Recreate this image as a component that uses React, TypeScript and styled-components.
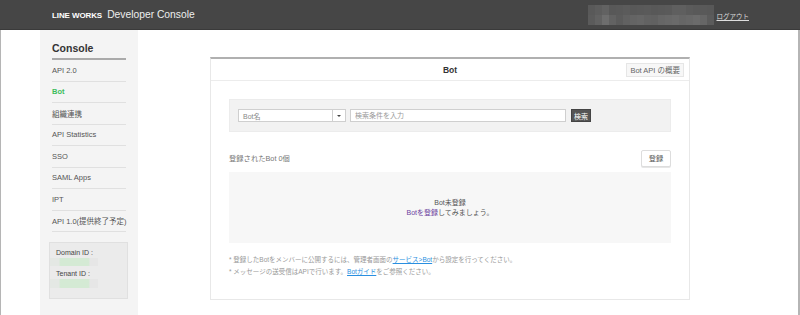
import React from 'react';
import styled, {createGlobalStyle} from 'styled-components'

const GlobalStyle = createGlobalStyle`
  html, body {
    margin: 0;
    padding: 0;
    background: #fff;
  }
  body {
    font-family: "Liberation Sans", "Noto Sans CJK JP", sans-serif;
    color: #555;
  }
`

const Page = styled.div`
  width: 800px;
  height: 315px;
  box-sizing: border-box;
  display: flex;
  flex-direction: column;
  overflow: hidden;
`

const Header = styled.header`
  height: 30px;
  flex-shrink: 0;
  box-sizing: border-box;
  background: #464646;
  border-bottom: 1px solid #3a3a3a;
  display: flex;
  align-items: center;
  justify-content: space-between;
  padding: 0 51px 0 52px;
`

const Logo = styled.div`
  display: flex;
  align-items: baseline;
  gap: 5px;
  color: #fff;
`

const LogoMark = styled.span`
  font-size: 8px;
  font-weight: bold;
  letter-spacing: -0.1px;
`

const LogoTitle = styled.span`
  font-size: 10.3px;
  color: #eee;
`

const UserArea = styled.div`
  display: flex;
  align-items: center;
  gap: 3px;
`

const Mosaic = styled.div`
  display: grid;
  grid-template-columns: repeat(18, 7px);
  grid-auto-rows: 10px;
  opacity: 0.9;
`

const Logout = styled.a`
  font-size: 6.5px;
  color: #ddd;
  text-decoration: underline;
  margin-top: 2px;
`

const Body = styled.div`
  flex: 1;
  display: flex;
  border-left: 1px solid #b5b5b5;
  border-right: 2px solid #b5b5b5;
  padding-left: 39px;
`

const Sidebar = styled.nav`
  width: 98px;
  box-sizing: border-box;
  background: #f4f4f4;
  padding: 0 12px;
`

const SideTitle = styled.div`
  font-size: 10.5px;
  font-weight: bold;
  color: #333;
  line-height: 14px;
  padding: 11px 0 3px;
  border-bottom: 2px solid #aaa;
`

const MenuItem = styled.div<{ active?: boolean }>`
  height: 20.5px;
  display: flex;
  align-items: center;
  font-size: 7.5px;
  white-space: nowrap;
  border-bottom: 1px solid #e0e0e0;
  color: ${({active}) => (active ? '#3dbd5d' : '#555')};
  font-weight: ${({active}) => (active ? 'bold' : 'normal')};
`

const IdBox = styled.div`
  margin: 10px -2px 0 -3px;
  background: #ebebeb;
  border: 1px solid #e0e0e0;
  padding: 5px 6px 7px;
  font-size: 7px;
  color: #444;
`

const IdLabel = styled.div`
  line-height: 10px;
  & + & {
    margin-top: 0;
  }
`

const IdValue = styled.div<{ tall?: boolean }>`
  width: 48px;
  height: ${({tall}) => (tall ? 9 : 8)}px;
  margin: 0 0 3px -6px;
  background: linear-gradient(to right, #e4e8e4 0, #e4e8e4 18%, #d4ead4 22%, #d4ead4 80%, #e6e6e6 84%);
`

const Main = styled.main`
  flex: 1;
  padding: 27px 0 0 72px;
`

const Panel = styled.section`
  width: 480px;
  box-sizing: border-box;
  border-top: 2px solid #b0b0b0;
  border-left: 1px solid #e8e8e8;
  border-right: 1px solid #e8e8e8;
  border-bottom: 1px solid #e8e8e8;
`

const PanelHead = styled.div`
  height: 21px;
  border-bottom: 1px solid #ececec;
  display: grid;
  grid-template-columns: 1fr auto 1fr;
  align-items: center;
`

const PanelTitle = styled.div`
  grid-column: 2;
  font-size: 8.5px;
  font-weight: bold;
  color: #333;
`

const GhostButton = styled.button`
  justify-self: end;
  margin-right: 5px;
  height: 14px;
  padding: 0 3px;
  font-family: inherit;
  font-size: 7.5px;
  color: #666;
  background: #f7f7f7;
  border: 1px solid #e6e6e6;
  cursor: pointer;
`

const PanelBody = styled.div`
  padding: 18px 18px 21px;
`

const SearchBox = styled.div`
  height: 33px;
  box-sizing: border-box;
  background: #f2f2f2;
  border: 1px solid #ececec;
  display: flex;
  align-items: center;
  padding-left: 8px;
`

const Select = styled.div`
  width: 108px;
  height: 13px;
  box-sizing: border-box;
  display: flex;
  background: #fff;
  border: 1px solid #cfcfcf;
  font-size: 7px;
  color: #888;
`

const SelectText = styled.span`
  flex: 1;
  display: flex;
  align-items: center;
  padding-left: 4px;
`

const SelectArrow = styled.span`
  width: 12px;
  border-left: 1px solid #cfcfcf;
  display: flex;
  align-items: center;
  justify-content: center;
  &::after {
    content: '';
    border-left: 2px solid transparent;
    border-right: 2px solid transparent;
    border-top: 2px solid #444;
  }
`

const Input = styled.input`
  width: 216px;
  height: 13px;
  box-sizing: border-box;
  margin-left: 4px;
  padding: 0 4px;
  border: 1px solid #cfcfcf;
  font-family: inherit;
  font-size: 7px;
  outline: none;
  &::placeholder {
    color: #999;
  }
`

const DarkButton = styled.button`
  margin-left: 5px;
  width: 20px;
  height: 13px;
  padding: 0;
  background: #555;
  border: 1px solid #444;
  color: #fff;
  font-family: inherit;
  font-size: 7px;
`

const ListHead = styled.div`
  margin-top: 18px;
  height: 16px;
  display: flex;
  align-items: center;
  justify-content: space-between;
  font-size: 7.3px;
  color: #777;
`

const LightButton = styled.button`
  width: 30px;
  height: 17px;
  padding: 0;
  background: #fff;
  border: 1px solid #ddd;
  border-radius: 2px;
  box-shadow: 0 1px 0 #e6e6e6;
  color: #555;
  font-family: inherit;
  font-size: 7.3px;
`

const Empty = styled.div`
  margin-top: 6px;
  height: 71px;
  background: #f7f7f7;
  display: flex;
  flex-direction: column;
  align-items: center;
  justify-content: center;
  font-size: 7px;
  line-height: 10px;
  color: #555;
`

const PurpleLink = styled.a`
  color: #6b3fa0;
`

const Notes = styled.ul`
  list-style: none;
  margin: 11px 0 0;
  padding: 0;
  font-size: 6.5px;
  line-height: 12px;
  color: #999;
`

const Note = styled.li`
  &::before {
    content: '* ';
  }
`

const BlueLink = styled.a`
  color: #2a8fe0;
  text-decoration: underline;
`

const mosaic = [
  '5c', '60', '66', '5a', '5c', '5e', '5b', '5c', '5d', '5a', '5c', '5d', '62', '62', '5e', '5c', '5c', '5a',
  '5e', '66', '73', '66', '5e', '64', '68', '6a', '66', '64', '6a', '6c', '6e', '6a', '6c', '70', '6a', '5e',
]

const menu = ['API 2.0', 'Bot', '組織連携', 'API Statistics', 'SSO', 'SAML Apps', 'IPT', 'API 1.0(提供終了予定)']

const App: React.FC = () => {
    return (
        <Page>
            <GlobalStyle/>
            <Header>
                <Logo>
                    <LogoMark>LINE WORKS</LogoMark>
                    <LogoTitle>Developer Console</LogoTitle>
                </Logo>
                <UserArea>
                    <Mosaic>
                        {mosaic.map((c, i) => (
                            <span key={i} style={{background: `#${c}${c}${c}`}}/>
                        ))}
                    </Mosaic>
                    <Logout>ログアウト</Logout>
                </UserArea>
            </Header>
            <Body>
                <Sidebar>
                    <SideTitle>Console</SideTitle>
                    {menu.map(item => (
                        <MenuItem key={item} active={item === 'Bot'}>{item}</MenuItem>
                    ))}
                    <IdBox>
                        <IdLabel>Domain ID :</IdLabel>
                        <IdValue/>
                        <IdLabel>Tenant ID :</IdLabel>
                        <IdValue tall/>
                    </IdBox>
                </Sidebar>
                <Main>
                    <Panel>
                        <PanelHead>
                            <PanelTitle>Bot</PanelTitle>
                            <GhostButton>Bot API の概要</GhostButton>
                        </PanelHead>
                        <PanelBody>
                            <SearchBox>
                                <Select>
                                    <SelectText>Bot名</SelectText>
                                    <SelectArrow/>
                                </Select>
                                <Input placeholder="検索条件を入力"/>
                                <DarkButton>検索</DarkButton>
                            </SearchBox>
                            <ListHead>
                                <span>登録されたBot 0個</span>
                                <LightButton>登録</LightButton>
                            </ListHead>
                            <Empty>
                                <div>Bot未登録</div>
                                <div><PurpleLink>Botを登録</PurpleLink>してみましょう。</div>
                            </Empty>
                            <Notes>
                                <Note>登録したBotをメンバーに公開するには、管理者画面の<BlueLink>サービス&gt;Bot</BlueLink>から設定を行ってください。</Note>
                                <Note>メッセージの送受信はAPIで行います。<BlueLink>Botガイド</BlueLink>をご参照ください。</Note>
                            </Notes>
                        </PanelBody>
                    </Panel>
                </Main>
            </Body>
        </Page>
    );
};

export default App;
